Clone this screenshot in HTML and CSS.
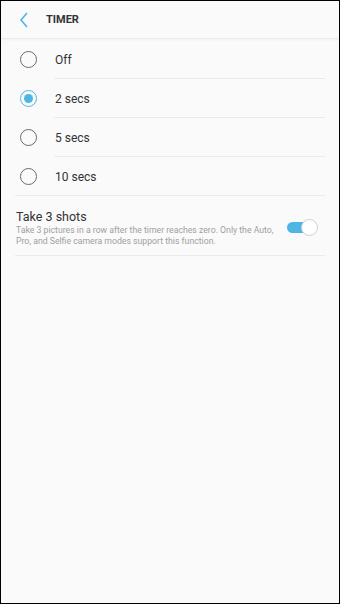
FILE: index.html
```html
<!DOCTYPE html>
<html lang="en">
<head>
    <meta charset="UTF-8">
    <meta name="viewport" content="width=device-width, initial-scale=1.0">
    <title>Timer</title>
    <link rel="stylesheet" href="styles.css">
</head>
<body>
    <div class="screen">
        <div class="header">
            <svg class="back" width="10" height="16" viewBox="0 0 10 16">
                <path d="M8 1 L2 8 L8 15" fill="none" stroke="#4db6e2" stroke-width="1.6"/>
            </svg>
            <span class="title">TIMER</span>
        </div>

        <div class="options">
            <div class="option">
                <span class="radio"></span>
                <span class="label">Off</span>
            </div>
            <div class="option">
                <span class="radio checked"></span>
                <span class="label">2 secs</span>
            </div>
            <div class="option">
                <span class="radio"></span>
                <span class="label">5 secs</span>
            </div>
            <div class="option last">
                <span class="radio"></span>
                <span class="label">10 secs</span>
            </div>
        </div>

        <div class="setting">
            <div class="setting-text">
                <div class="setting-title">Take 3 shots</div>
                <div class="setting-desc">Take 3 pictures in a row after the timer reaches zero. Only the Auto, Pro, and Selfie camera modes support this function.</div>
            </div>
            <div class="switch on"><span class="thumb"></span></div>
        </div>
    </div>
</body>
</html>
```

FILE: styles.css
```css
* {
    box-sizing: border-box;
}
body {
    margin: 0;
    font-family: Roboto, 'Noto Sans', sans-serif;
    background-color: #000;
}
.screen {
    width: 340px;
    height: 604px;
    border: 1px solid #000;
    background-color: #fafafa;
    overflow: hidden;
}
.header {
    height: 38px;
    display: flex;
    align-items: center;
    padding-left: 18px;
    border-bottom: 1px solid #ececec;
    box-shadow: 0 1px 2px rgba(0, 0, 0, 0.04);
}
.back {
    display: block;
}
.title {
    margin-left: 17px;
    font-size: 11px;
    font-weight: bold;
    color: #333;
}
.options {
    padding: 1px 14px 0;
}
.option {
    height: 39px;
    display: flex;
    align-items: center;
    position: relative;
}
.option::after {
    content: "";
    position: absolute;
    left: 39px;
    right: 0;
    bottom: 0;
    border-bottom: 1px solid #ebebeb;
}
.option.last::after {
    left: 0;
}
.radio {
    width: 17px;
    height: 17px;
    margin-left: 5px;
    border: 1.5px solid #6b6b6b;
    border-radius: 50%;
    display: flex;
    align-items: center;
    justify-content: center;
}
.radio.checked {
    border-color: #4db6e2;
}
.radio.checked::before {
    content: "";
    width: 9px;
    height: 9px;
    border-radius: 50%;
    background-color: #4db6e2;
}
.label {
    margin-left: 18px;
    font-size: 12px;
    color: #333;
}
.setting {
    margin: 0 14px;
    padding: 12px 0 9px 1px;
    display: flex;
    align-items: center;
    border-bottom: 1px solid #ebebeb;
}
.setting-text {
    flex: 1;
}
.setting-title {
    font-size: 12.5px;
    color: #333;
    line-height: 17px;
}
.setting-desc {
    font-size: 8.7px;
    color: #a0a0a0;
    line-height: 10.5px;
    padding-right: 8px;
}
.switch {
    width: 31px;
    height: 17px;
    position: relative;
    margin-right: 7px;
}
.switch::before {
    content: "";
    position: absolute;
    left: 0;
    right: 6px;
    top: 3px;
    height: 11px;
    border-radius: 6px;
    background-color: #4db6e2;
}
.thumb {
    position: absolute;
    right: 0;
    top: 0;
    width: 17px;
    height: 17px;
    border-radius: 50%;
    background-color: #fff;
    border: 1px solid #cfcfcf;
}
```
